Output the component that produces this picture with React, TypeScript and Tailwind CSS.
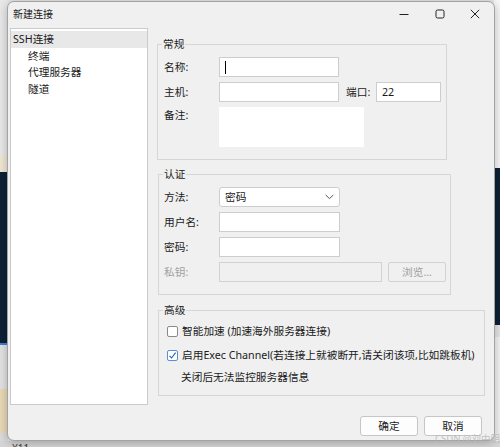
import React from "react"

const FONT = "font-['Noto_Sans','Noto_Sans_CJK_SC',sans-serif]"

function Field({ className = "", children }: { className?: string; children?: React.ReactNode }) {
    return <div className={`h-[20px] border border-[#cdcdcd] bg-white flex items-center pl-[5px] ${className}`}>{children}</div>
}

function Row({ label, disabled, children }: { label: string; disabled?: boolean; children: React.ReactNode }) {
    return (
        <div className="flex items-center h-[20px]">
            <span className={`w-[55px] shrink-0 ${disabled ? "text-[#a0a0a0]" : ""}`}>{label}</span>
            {children}
        </div>
    )
}

function Group({ title, className, children }: { title: string; className: string; children: React.ReactNode }) {
    return (
        <fieldset className={`border border-[#d6d6d6] p-0 m-0 ${className}`}>
            <legend className="ml-[4px] px-[1px] leading-[16px]">{title}</legend>
            {children}
        </fieldset>
    )
}

function CheckBox({ checked }: { checked?: boolean }) {
    return (
        <span
            className={`w-[11px] h-[11px] shrink-0 rounded-[2px] border bg-white flex items-center justify-center ${
                checked ? "border-[#5b8fd4]" : "border-[#8a8a8a]"
            }`}
        >
            {checked && (
                <svg width="9" height="9" viewBox="0 0 9 9" fill="none">
                    <path d="M1.5 4.8 L3.6 7 L7.6 1.6" stroke="#1f62c6" strokeWidth="1.1" />
                </svg>
            )}
        </span>
    )
}

export default function App() {
    return (
        <div className={`relative w-[500px] h-[447px] overflow-hidden bg-[#d9d9d9] text-[10.7px] text-[#1a1a1a] ${FONT}`}>
            {/* Desktop behind the dialog */}
            <div className="flex h-[441px]">
                <div className="w-[8px] flex flex-col">
                    <div className="h-[155px] bg-[#e8e8e8]" />
                    <div className="h-[17px] bg-[#efe6d4]" />
                    <div className="h-[171px] bg-[#0d2036]" />
                    <div className="h-[2px] bg-[#3c7fd8]" />
                    <div className="h-[44px] bg-[#e2e2e2]" />
                    <div className="h-[44px] bg-[#e8d9b6]" />
                    <div className="flex-1 bg-[#dadada]" />
                </div>
                <div className="flex-1 bg-[#e4e4e4]" />
                <div className="w-[6px] flex flex-col">
                    <div className="h-[168px] bg-[#f6f6f6]" />
                    <div className="h-[157px] bg-[#0d2036]" />
                    <div className="h-[12px] bg-[#e4e4e4]" />
                    <div className="flex-1 bg-[#f3f3f3]" />
                </div>
            </div>
            <div className="h-[6px] overflow-hidden bg-[#d6d6d6] pl-[12px] text-[10px] leading-[14px] text-[#333]">X11</div>

            {/* Dialog window */}
            <div className="absolute left-[7px] top-[1px] w-[488px] h-[440px] rounded-[7px] border border-[#a3a3a3] bg-[#f0f0f0] shadow-[0_2px_10px_rgba(0,0,0,0.25)] flex flex-col">
                {/* Title bar */}
                <div className="h-[24px] flex items-center pl-[5px]">
                    <span className="flex-1 text-[10px]">新建连接</span>
                    <div className="flex items-center">
                        <div className="w-[36px] h-[24px] flex items-center justify-center">
                            <svg width="10" height="10" viewBox="0 0 10 10">
                                <path d="M0.5 5.5 H9.5" stroke="#222" strokeWidth="1" />
                            </svg>
                        </div>
                        <div className="w-[36px] h-[24px] flex items-center justify-center">
                            <svg width="10" height="10" viewBox="0 0 10 10" fill="none">
                                <rect x="1" y="1" width="8" height="8" rx="1.5" stroke="#222" strokeWidth="1" />
                            </svg>
                        </div>
                        <div className="w-[36px] h-[24px] flex items-center justify-center pr-[2px]">
                            <svg width="10" height="10" viewBox="0 0 10 10">
                                <path d="M0.8 0.8 L9.2 9.2 M9.2 0.8 L0.8 9.2" stroke="#222" strokeWidth="1" />
                            </svg>
                        </div>
                    </div>
                </div>

                {/* Body */}
                <div className="flex mt-[2px] pl-[2px]">
                    {/* Tree */}
                    <div className="w-[138px] h-[377px] shrink-0 border border-[#cbcbcb] bg-white pt-[1px]">
                        <div className="h-[16.5px] mt-[1px] bg-[#e8e8e8] flex items-center pl-[2px]">SSH连接</div>
                        <div className="h-[16.5px] flex items-center pl-[17px]">终端</div>
                        <div className="h-[16.5px] flex items-center pl-[17px]">代理服务器</div>
                        <div className="h-[16.5px] flex items-center pl-[17px]">隧道</div>
                    </div>

                    {/* Right side */}
                    <div className="flex-1 ml-[9px] flex flex-col">
                        <Group title="常规" className="w-[290px] mt-[8px]">
                            <div className="flex flex-col gap-[5px] pt-[5px] pb-[12px] pl-[6px]">
                                <Row label="名称:">
                                    <Field className="w-[120px] border-[#6ea0d8]">
                                        <span className="w-[1px] h-[13px] bg-black" />
                                    </Field>
                                </Row>
                                <Row label="主机:">
                                    <Field className="w-[120px]" />
                                    <span className="ml-[7px] w-[30px]">端口:</span>
                                    <Field className="w-[65px]">22</Field>
                                </Row>
                                <div className="flex h-[40px]">
                                    <span className="w-[55px] shrink-0 leading-[16px]">备注:</span>
                                    <div className="w-[145px] h-[40px] bg-white" />
                                </div>
                            </div>
                        </Group>

                        <Group title="认证" className="w-[293px] ml-[1px] mt-[6px]">
                            <div className="flex flex-col gap-[5px] pt-[5px] pb-[12px] pl-[5px]">
                                <Row label="方法:">
                                    <div className="w-[121px] h-[20px] rounded-[3px] border border-[#cdcdcd] bg-white flex items-center justify-between pl-[5px] pr-[5px]">
                                        <span>密码</span>
                                        <svg width="9" height="6" viewBox="0 0 9 6" fill="none">
                                            <path d="M0.7 1 L4.5 4.6 L8.3 1" stroke="#555" strokeWidth="1" />
                                        </svg>
                                    </div>
                                </Row>
                                <Row label="用户名:">
                                    <Field className="w-[121px]" />
                                </Row>
                                <Row label="密码:">
                                    <Field className="w-[121px]" />
                                </Row>
                                <Row label="私钥:" disabled>
                                    <div className="w-[163px] h-[20px] border border-[#d2d2d2] bg-[#f0f0f0]" />
                                    <div className="ml-[6px] w-[58px] h-[20px] rounded-[2px] border border-[#d2d2d2] bg-[#f0f0f0] text-[#a0a0a0] flex items-center justify-center">
                                        浏览...
                                    </div>
                                </Row>
                            </div>
                        </Group>

                        <Group title="高级" className="w-[327px] ml-[1px] mt-[7px]">
                            <div className="flex flex-col pt-[3px] pb-[8px] pl-[8px]">
                                <div className="h-[20px] flex items-center gap-[4px]">
                                    <CheckBox />
                                    <span>智能加速 (加速海外服务器连接)</span>
                                </div>
                                <div className="h-[20px] mt-[4px] flex items-center gap-[4px]">
                                    <CheckBox checked />
                                    <span className="whitespace-nowrap">启用Exec Channel(若连接上就被断开,请关闭该项,比如跳板机)</span>
                                </div>
                                <div className="h-[20px] mt-[2px] flex items-center pl-[14px]">关闭后无法监控服务器信息</div>
                            </div>
                        </Group>

                        <div className="flex justify-end gap-[6px] mt-[20px] pr-[12px]">
                            <button className="w-[58px] h-[20px] rounded-[3px] border border-[#c6c6c6] bg-[#fdfdfd]">确定</button>
                            <button className="w-[58px] h-[20px] rounded-[3px] border border-[#c6c6c6] bg-[#fdfdfd]">取消</button>
                        </div>
                    </div>
                </div>
            </div>

            {/* Watermark */}
            <span className="absolute left-[435px] top-[434px] text-[9.5px] leading-[10px] text-[#b4b4b4]/80 whitespace-nowrap">CSDN @刘中明</span>
        </div>
    )
}
